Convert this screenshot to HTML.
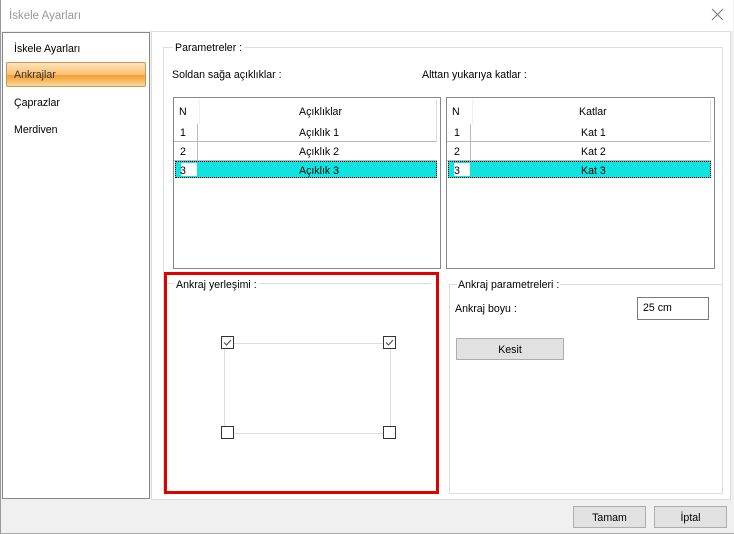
<html><head><style>
body{margin:0;width:734px;height:534px;overflow:hidden;background:#f0f0f0;font-family:"Liberation Sans",sans-serif;font-size:10.6px;color:#000;position:relative}
.a{position:absolute}
.t{white-space:nowrap;margin-top:1px}
</style></head><body>
<div class="a" style="left:0;top:0;width:733px;height:533px;border:1px solid #999;border-top:none;border-bottom-color:#aaa"></div>
<div class="a" style="left:1px;top:0;width:732px;height:31px;background:#fff"></div>
<div class="a t" style="left:9px;top:9px;font-size:11.5px;color:#999">İskele Ayarları</div>
<svg class="a" style="left:711px;top:8px" width="14" height="14"><path d="M1 1L12 12M12 1L1 12" stroke="#777" stroke-width="1"/></svg>
<div class="a" style="left:2px;top:32px;width:146px;height:465px;background:#fff;border:1px solid #888"></div>
<div class="a t" style="left:14px;top:42px">İskele Ayarları</div>
<div class="a" style="left:6px;top:62px;width:138px;height:23px;border:1px solid #c69a5e;border-radius:2px;background:linear-gradient(#fde3b8,#fbc176 50%,#f59e2e 55%,#fcd79a)"></div>
<div class="a t" style="left:14px;top:68px;color:#333">Ankrajlar</div>
<div class="a t" style="left:14px;top:96px">Çaprazlar</div>
<div class="a t" style="left:14px;top:123px">Merdiven</div>
<div class="a" style="left:151px;top:31px;width:578px;height:467px;background:#fff;border:1px solid #ddd"></div>
<div class="a" style="left:163px;top:47px;width:558px;height:445px;border:1px solid #ddd;border-bottom:none"></div>
<div class="a t" style="left:173px;top:41px;background:#fff;padding:0 2px">Parametreler :</div>
<div class="a t" style="left:172px;top:68px">Soldan sağa açıklıklar :</div>
<div class="a t" style="left:422px;top:68px">Alttan yukarıya katlar :</div>

<div class="a" style="left:173px;top:97px;width:266px;height:170px;border:1px solid #888;background:#fff"></div>
<div class="a" style="left:199px;top:100px;width:1px;height:24px;background:#eee"></div>
<div class="a t" style="left:179px;top:105px">N</div><div class="a t" style="left:299px;top:105px">Açıklıklar</div>
<div class="a" style="left:436px;top:100px;width:1px;height:40px;background:#ddd"></div>
<div class="a" style="left:174px;top:141px;width:263px;height:1px;background:#bbb"></div>
<div class="a" style="left:174px;top:160px;width:263px;height:1px;background:#bbb"></div>
<div class="a" style="left:197px;top:124px;width:1px;height:36px;background:#bbb"></div>
<div class="a t" style="left:180px;top:126px">1</div><div class="a t" style="left:299px;top:126px">Açıklık 1</div>
<div class="a t" style="left:180px;top:145px">2</div><div class="a t" style="left:299px;top:145px">Açıklık 2</div>
<div class="a" style="left:175px;top:161px;width:262px;height:17px;border:1px dotted #000;box-sizing:border-box;background:#11e4e0"></div>
<div class="a" style="left:181px;top:163px;width:16px;height:13px;background:#fff"></div>
<div class="a t" style="left:180px;top:164px">3</div><div class="a t" style="left:299px;top:164px">Açıklık 3</div>

<div class="a" style="left:446px;top:97px;width:267px;height:170px;border:1px solid #888;background:#fff"></div>
<div class="a" style="left:472px;top:100px;width:1px;height:24px;background:#eee"></div>
<div class="a t" style="left:452px;top:105px">N</div><div class="a t" style="left:579px;top:105px">Katlar</div>
<div class="a" style="left:710px;top:100px;width:1px;height:40px;background:#ddd"></div>
<div class="a" style="left:447px;top:141px;width:264px;height:1px;background:#bbb"></div>
<div class="a" style="left:447px;top:160px;width:264px;height:1px;background:#bbb"></div>
<div class="a" style="left:470px;top:124px;width:1px;height:36px;background:#bbb"></div>
<div class="a t" style="left:454px;top:126px">1</div><div class="a t" style="left:581px;top:126px">Kat 1</div>
<div class="a t" style="left:454px;top:145px">2</div><div class="a t" style="left:581px;top:145px">Kat 2</div>
<div class="a" style="left:448px;top:161px;width:263px;height:17px;border:1px dotted #000;box-sizing:border-box;background:#11e4e0"></div>
<div class="a" style="left:454px;top:163px;width:16px;height:13px;background:#fff"></div>
<div class="a t" style="left:454px;top:164px">3</div><div class="a t" style="left:581px;top:164px">Kat 3</div>

<div class="a" style="left:164px;top:272px;width:269px;height:216px;border:3px solid #e00000"></div>
<div class="a" style="left:168px;top:283px;width:263px;height:1px;background:#ddd"></div>
<div class="a t" style="left:174px;top:278px;background:#fff;padding:0 2px">Ankraj yerleşimi :</div>
<div class="a" style="left:224px;top:343px;width:165px;height:89px;border:1px solid #ddd"></div>
<svg class="a" style="left:221px;top:336px" width="14" height="14"><rect x="0.5" y="0.5" width="12" height="12" fill="#fff" stroke="#333"/><path d="M3 6.5L5.5 9L10 4" stroke="#555" fill="none" stroke-width="1.2"/></svg>
<svg class="a" style="left:383px;top:336px" width="14" height="14"><rect x="0.5" y="0.5" width="12" height="12" fill="#fff" stroke="#333"/><path d="M3 6.5L5.5 9L10 4" stroke="#555" fill="none" stroke-width="1.2"/></svg>
<svg class="a" style="left:221px;top:426px" width="14" height="14"><rect x="0.5" y="0.5" width="12" height="12" fill="#fff" stroke="#333"/></svg>
<svg class="a" style="left:383px;top:426px" width="14" height="14"><rect x="0.5" y="0.5" width="12" height="12" fill="#fff" stroke="#333"/></svg>

<div class="a" style="left:449px;top:284px;width:272px;height:208px;border:1px solid #ddd"></div>
<div class="a t" style="left:457px;top:278px;background:#fff;padding:0 1px">Ankraj parametreleri :</div>
<div class="a t" style="left:455px;top:302px">Ankraj boyu :</div>
<div class="a" style="left:637px;top:297px;width:70px;height:21px;border:1px solid #7a7a7a;background:#fff"></div>
<div class="a t" style="left:643px;top:301px">25 cm</div>
<div class="a" style="left:456px;top:338px;width:106px;height:20px;border:1px solid #adadad;background:#e1e1e1;text-align:center;line-height:22px">Kesit</div>

<div class="a" style="left:573px;top:506px;width:71px;height:20px;border:1px solid #adadad;background:#e1e1e1;text-align:center;line-height:22px">Tamam</div>
<div class="a" style="left:654px;top:506px;width:71px;height:20px;border:1px solid #adadad;background:#e1e1e1;text-align:center;line-height:22px">İptal</div>
</body></html>
